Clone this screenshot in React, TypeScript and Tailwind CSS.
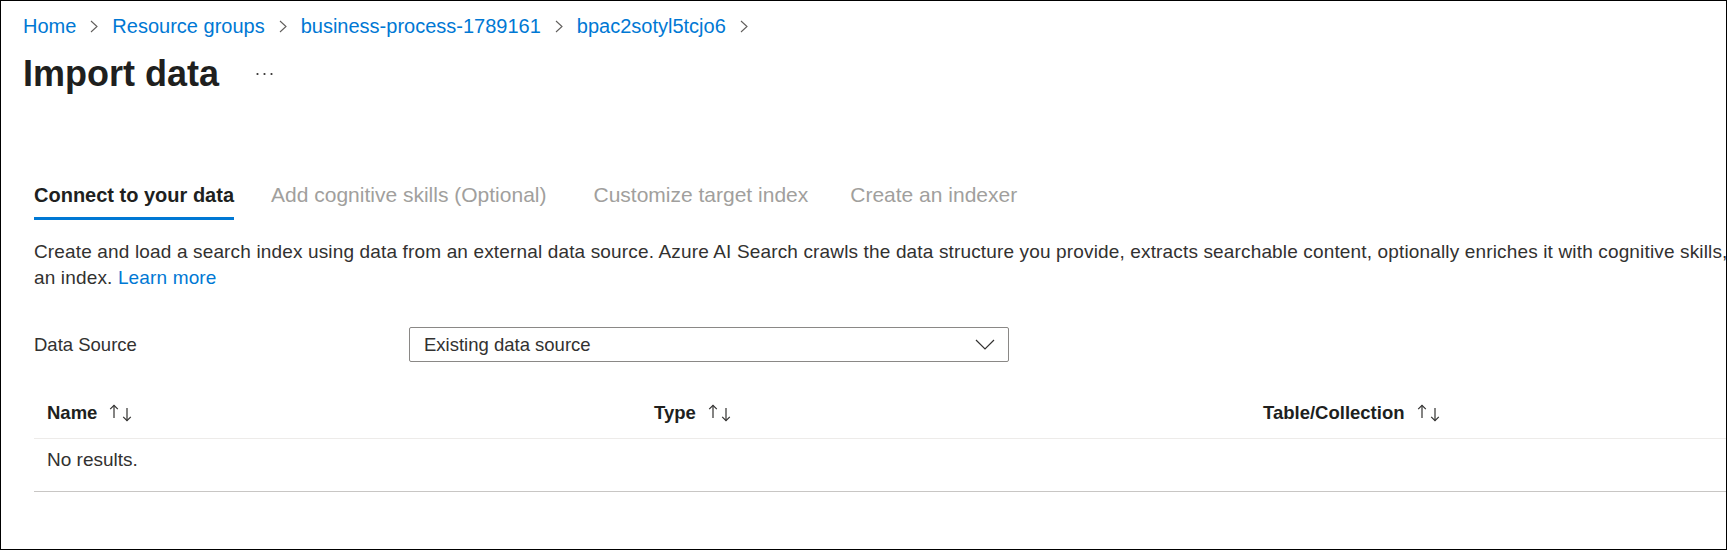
import React from "react";

function Chevron() {
  return (
    <svg width="8" height="13" viewBox="0 0 8 13" className="shrink-0">
      <polyline points="1,1 7,6.5 1,12" fill="none" stroke="#605e5c" strokeWidth="1.1" />
    </svg>
  );
}

function SortIcon() {
  return (
    <svg width="26" height="18" viewBox="0 0 26 18" className="ml-[12px] shrink-0">
      <line x1="5" y1="1.5" x2="5" y2="14" stroke="#323130" strokeWidth="1.2" />
      <polyline points="1.2,5.2 5,1.4 8.8,5.2" fill="none" stroke="#323130" strokeWidth="1.2" />
      <line x1="18" y1="4" x2="18" y2="16.5" stroke="#323130" strokeWidth="1.2" />
      <polyline points="14.2,12.8 18,16.6 21.8,12.8" fill="none" stroke="#323130" strokeWidth="1.2" />
    </svg>
  );
}

export default function App() {
  const crumbs = ["Home", "Resource groups", "business-process-1789161", "bpac2sotyl5tcjo6"];
  return (
    <div className="w-[1727px] h-[550px] border border-black bg-white overflow-hidden font-['Liberation_Sans',Arial,sans-serif] text-[#323130]">
      <div className="pl-[22px] pt-[13px]">
        <nav className="flex items-center h-[24px] text-[20px] leading-[24px]">
          {crumbs.map((c) => (
            <div key={c} className="flex items-center">
              <span className="text-[#0078d4] whitespace-nowrap">{c}</span>
              <span className="mx-[14px] flex items-center">
                <Chevron />
              </span>
            </div>
          ))}
        </nav>
        <div className="mt-[14px] flex items-center h-[44px]">
          <h1 className="text-[36px] leading-[44px] font-bold text-[#201f1e] whitespace-nowrap">Import data</h1>
          <svg width="18" height="4" viewBox="0 0 18 4" className="ml-[37px]">
            <circle cx="1.5" cy="2" r="1.1" fill="#323130" />
            <circle cx="8.5" cy="2" r="1.1" fill="#323130" />
            <circle cx="15.5" cy="2" r="1.1" fill="#323130" />
          </svg>
        </div>
      </div>

      <div className="pl-[33px] mt-[87px]">
        <div className="flex items-end">
          <div className="pb-[10px] border-b-[3px] border-[#0078d4] text-[20px] leading-[24px] font-bold text-[#201f1e] whitespace-nowrap">
            Connect to your data
          </div>
          <div className="ml-[37px] pb-[10px] border-b-[3px] border-transparent text-[21px] leading-[24px] text-[#a19f9d] whitespace-nowrap">
            Add cognitive skills (Optional)
          </div>
          <div className="ml-[47px] pb-[10px] border-b-[3px] border-transparent text-[21px] leading-[24px] text-[#a19f9d] whitespace-nowrap">
            Customize target index
          </div>
          <div className="ml-[42px] pb-[10px] border-b-[3px] border-transparent text-[21px] leading-[24px] text-[#a19f9d] whitespace-nowrap">
            Create an indexer
          </div>
        </div>

        <p className="mt-[19px] text-[19px] tracking-[0.15px] leading-[25.5px] whitespace-nowrap">
          Create and load a search index using data from an external data source. Azure AI Search crawls the data structure you provide, extracts searchable content, optionally enriches it with cognitive skills,
          <br />
          an index. <span className="text-[#0078d4]">Learn more</span>
        </p>

        <div className="mt-[37px] flex items-center text-[18.5px]">
          <div className="w-[375px]">Data Source</div>
          <div className="w-[600px] h-[35px] border border-[#8a8886] rounded-[2px] flex items-center justify-between pl-[14px] pr-[13px]">
            <span>Existing data source</span>
            <svg width="20" height="11" viewBox="0 0 20 11">
              <polyline points="1,1 10,10 19,1" fill="none" stroke="#323130" strokeWidth="1.2" />
            </svg>
          </div>
        </div>

        <div className="mt-[26px] w-[1800px] text-[18.5px]">
          <div className="grid grid-cols-[607px_609px_1fr] h-[51px] items-center border-b border-[#edebe9] font-bold text-[#201f1e]">
            <div className="pl-[13px] flex items-center">
              <span>Name</span>
              <SortIcon />
            </div>
            <div className="pl-[13px] flex items-center">
              <span>Type</span>
              <SortIcon />
            </div>
            <div className="pl-[13px] flex items-center">
              <span>Table/Collection</span>
              <SortIcon />
            </div>
          </div>
          <div className="pl-[13px] pt-[8px] pb-[18px] leading-[25.5px] text-[19px] border-b border-[#c8c6c4]">No results.</div>
        </div>
      </div>
    </div>
  );
}
